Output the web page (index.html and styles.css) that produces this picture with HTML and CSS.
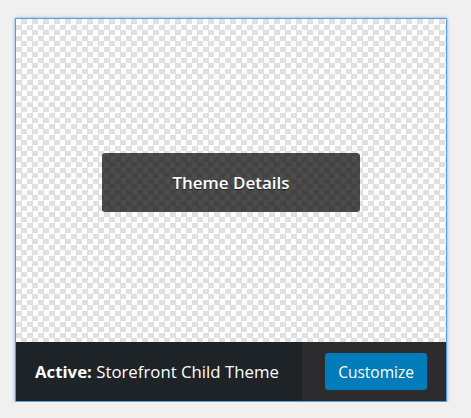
FILE: index.html
```html
<!DOCTYPE html>
<html lang="en">
<head>
  <meta charset="UTF-8" />
  <title>Themes</title>
  <link rel="stylesheet" href="styles.css">
</head>
<body>
  <div class="theme active">
    <div class="theme-screenshot">
      <span class="more-details">Theme Details</span>
    </div>
    <div class="theme-id-container">
      <h2 class="theme-name"><span>Active:</span> Storefront Child Theme</h2>
      <div class="theme-actions">
        <a class="button" href="#">Customize</a>
      </div>
    </div>
  </div>
</body>
</html>
```

FILE: styles.css
```css
body {
  margin: 0;
  background-color: #f0f0f1;
  font-family: 'Open Sans', sans-serif;
}
.theme {
  box-sizing: border-box;
  width: 432px;
  height: 384px;
  margin: 18px 0 0 15px;
  border: 1px solid #5a9dd9;
  box-shadow: 0 0 3px rgba(79, 148, 212, 0.8);
  display: flex;
  flex-direction: column;
}
.theme-screenshot {
  position: relative;
  flex: 1;
  background-color: #fff;
  background-image: conic-gradient(#e0e0e0 25%, #fff 0 50%, #e0e0e0 0 75%, #fff 0);
  background-size: 11px 11px;
}
.more-details {
  position: absolute;
  top: 134px;
  left: 20%;
  width: 60%;
  height: 59px;
  display: flex;
  align-items: center;
  justify-content: center;
  background: rgba(0, 0, 0, 0.7);
  color: #fff;
  font-size: 17px;
  font-weight: 600;
  border-radius: 3px;
  text-shadow: 0 1px 0 rgba(0, 0, 0, 0.6);
}
.theme-id-container {
  display: flex;
  height: 59px;
  background: #1d2327;
}
.theme-name {
  flex: 1;
  margin: 0;
  padding: 0 0 0 19px;
  display: flex;
  align-items: center;
  color: #fff;
  font-size: 16.8px;
  font-weight: 400;
  white-space: pre;
}
.theme-name span {
  font-weight: 700;
}
.theme-actions {
  width: 144px;
  box-sizing: border-box;
  padding: 0 19px 0 23px;
  display: flex;
  align-items: center;
  background: #2c2c2f;
}
.button {
  display: flex;
  align-items: center;
  justify-content: center;
  width: 102px;
  height: 37px;
  border-radius: 3px;
  background: #007cba;
  color: #fff;
  font-size: 15.5px;
  text-decoration: none;
}
```
